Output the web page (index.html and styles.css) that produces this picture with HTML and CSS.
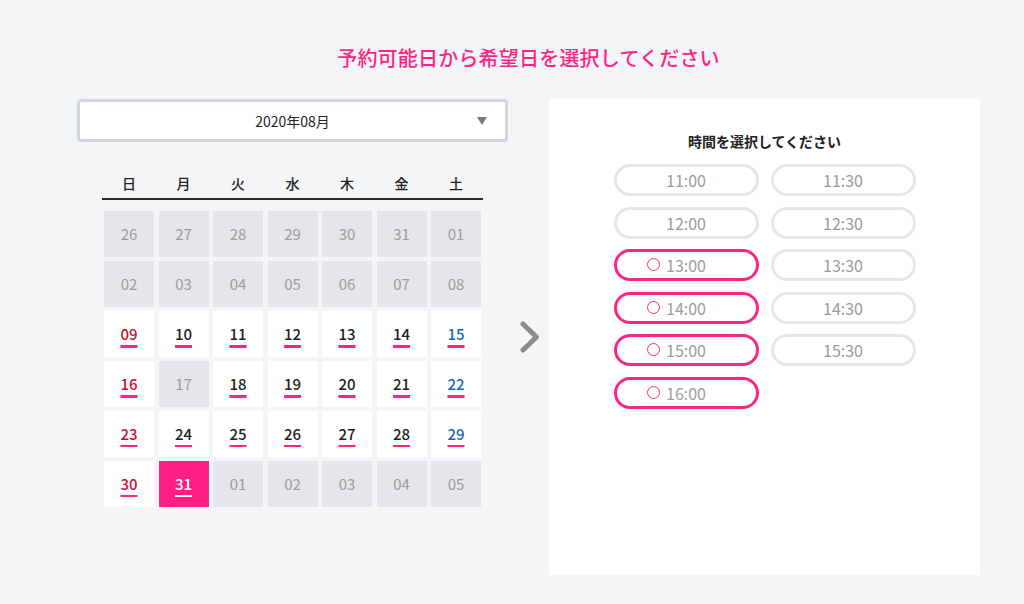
FILE: index.html
```html
<!DOCTYPE html>
<html lang="ja">
<head>
<meta charset="utf-8">
<title>予約</title>
<link rel="stylesheet" href="styles.css">
</head>
<body>
<div class="page">
  <h1 class="title">予約可能日から希望日を選択してください</h1>
  <div class="main">
    <div class="left">
      <div class="select">
        <span class="select-text">2020年08月</span>
        <span class="caret"></span>
      </div>
      <div class="weekdays">
        <span>日</span><span>月</span><span>火</span><span>水</span><span>木</span><span>金</span><span>土</span>
      </div>
      <div class="grid">
        <div class="cell off">26</div><div class="cell off">27</div><div class="cell off">28</div><div class="cell off">29</div><div class="cell off">30</div><div class="cell off">31</div><div class="cell off">01</div>
        <div class="cell off">02</div><div class="cell off">03</div><div class="cell off">04</div><div class="cell off">05</div><div class="cell off">06</div><div class="cell off">07</div><div class="cell off">08</div>
        <div class="cell on sun"><span>09</span></div><div class="cell on"><span>10</span></div><div class="cell on"><span>11</span></div><div class="cell on"><span>12</span></div><div class="cell on"><span>13</span></div><div class="cell on"><span>14</span></div><div class="cell on sat"><span>15</span></div>
        <div class="cell on sun"><span>16</span></div><div class="cell off">17</div><div class="cell on"><span>18</span></div><div class="cell on"><span>19</span></div><div class="cell on"><span>20</span></div><div class="cell on"><span>21</span></div><div class="cell on sat"><span>22</span></div>
        <div class="cell on thin sun"><span>23</span></div><div class="cell on thin"><span>24</span></div><div class="cell on thin"><span>25</span></div><div class="cell on thin"><span>26</span></div><div class="cell on thin"><span>27</span></div><div class="cell on thin"><span>28</span></div><div class="cell on thin sat"><span>29</span></div>
        <div class="cell on thin sun"><span>30</span></div><div class="cell on selected"><span>31</span></div><div class="cell off">01</div><div class="cell off">02</div><div class="cell off">03</div><div class="cell off">04</div><div class="cell off">05</div>
      </div>
    </div>
    <div class="arrow">
      <svg width="20" height="32" viewBox="0 0 20 32"><polyline points="3,3 16.5,16 3,29" fill="none" stroke="#8c8c8c" stroke-width="5" stroke-linecap="round" stroke-linejoin="round"/></svg>
    </div>
    <div class="panel">
      <h2 class="panel-title">時間を選択してください</h2>
      <div class="slots">
        <div class="slot"><span>11:00</span></div>
        <div class="slot"><span>11:30</span></div>
        <div class="slot"><span>12:00</span></div>
        <div class="slot"><span>12:30</span></div>
        <div class="slot avail"><span>13:00</span></div>
        <div class="slot"><span>13:30</span></div>
        <div class="slot avail"><span>14:00</span></div>
        <div class="slot"><span>14:30</span></div>
        <div class="slot avail"><span>15:00</span></div>
        <div class="slot"><span>15:30</span></div>
        <div class="slot avail"><span>16:00</span></div>
      </div>
    </div>
  </div>
</div>
</body>
</html>
```

FILE: styles.css
```css
* { box-sizing: border-box; }
html, body {
  margin: 0;
  padding: 0;
  background: #f4f5f7;
  font-family: "Noto Sans CJK JP", "Noto Sans", sans-serif;
  color: #222;
}
.page {
  width: 903px;
  margin-left: 77px;
}
.title {
  margin: 0;
  padding-top: 44px;
  height: 72px;
  line-height: 28px;
  font-size: 20px;
  font-weight: 500;
  color: #ff2585;
  text-align: center;
  letter-spacing: 0.2px;
}
.main {
  margin-top: 27px;
  display: flex;
  align-items: flex-start;
}
.left {
  width: 431px;
}
.select {
  height: 43px;
  border: 3px solid #d1d7de;
  border-radius: 4px;
  background: #fff;
  display: flex;
  align-items: center;
  justify-content: center;
  position: relative;
}
.select-text {
  font-size: 14px;
  color: #222;
}
.caret {
  position: absolute;
  right: 18px;
  top: 15px;
  width: 0;
  height: 0;
  border-left: 5px solid transparent;
  border-right: 5px solid transparent;
  border-top: 8px solid #7a7a7a;
}
.weekdays {
  width: 381px;
  margin: 26px auto 0;
  height: 32px;
  border-bottom: 2px solid #2a2a2a;
  display: grid;
  grid-template-columns: repeat(7, 50px);
  column-gap: 4.5px;
  padding: 0 2px;
  font-size: 14px;
  font-weight: 500;
  line-height: 30px;
  text-align: center;
}
.grid {
  width: 377px;
  margin: 11px auto 0;
  display: grid;
  grid-template-columns: repeat(7, 50px);
  grid-auto-rows: 45.5px;
  gap: 4.5px;
}
.cell {
  display: flex;
  align-items: center;
  justify-content: center;
  font-size: 15px;
}
.cell.off {
  background: #e5e6e9;
  color: #9c9c9c;
}
.cell.on {
  background: #fff;
  color: #222;
  font-weight: 500;
}
.cell.on span {
  text-decoration: underline;
  text-decoration-color: #ff2585;
  text-decoration-thickness: 2.5px;
  text-underline-offset: 5px;
}
.cell.on.thin span {
  text-decoration-thickness: 1.5px;
}
.cell.sun { color: #c8102e; }
.cell.sat { color: #1769b8; }
.cell.selected {
  background: #ff1f83;
  color: #fff;
}
.cell.selected span {
  text-decoration-color: #fff;
  text-decoration-thickness: 1.5px;
}
.arrow {
  width: 41px;
  height: 476px;
  display: flex;
  align-items: center;
  justify-content: center;
  padding-left: 2px;
}
.arrow svg { display: block; }
.panel {
  width: 431px;
  height: 476px;
  background: #fff;
  padding-top: 32px;
}
.panel-title {
  margin: 0;
  font-size: 14px;
  font-weight: 700;
  line-height: 20px;
  text-align: center;
  color: #222;
}
.slots {
  margin: 13px auto 0;
  width: 302px;
  display: grid;
  grid-template-columns: 145px 145px;
  column-gap: 12px;
  row-gap: 10.6px;
}
.slot {
  height: 32px;
  border: 3px solid #e5e6ea;
  border-radius: 16px;
  display: flex;
  align-items: center;
  justify-content: center;
  font-size: 16px;
  color: #9b9b9b;
  line-height: 1;
}
.slot span { position: relative; }
.slot.avail {
  border-color: #ff2585;
}
.slot.avail span::before {
  content: "";
  position: absolute;
  right: calc(100% + 6px);
  top: 50%;
  margin-top: -7px;
  width: 11px;
  height: 11px;
  border: 1.8px solid #ff2585;
  border-radius: 50%;
}
```
